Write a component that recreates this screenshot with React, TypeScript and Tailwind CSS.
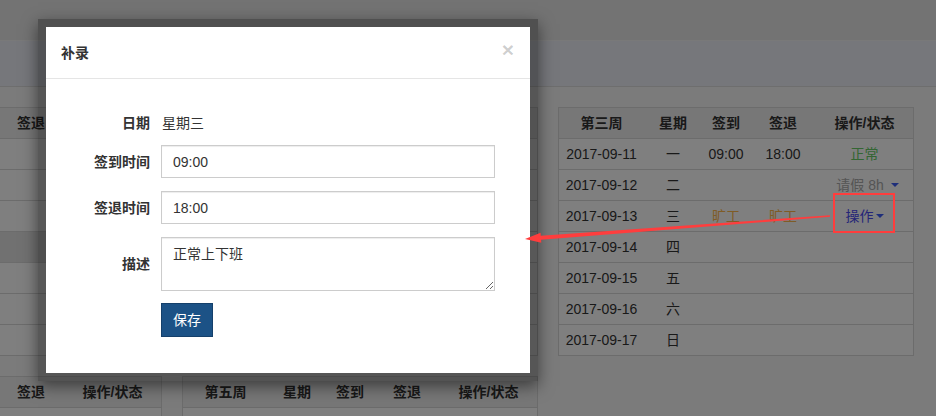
import React from 'react';

type Day = {
  date: string;
  weekday: string;
  signIn?: React.ReactNode;
  signOut?: React.ReactNode;
  status?: React.ReactNode;
  shaded?: boolean;
};

type Week = { title: string; days: Day[] };

const Caret = ({ className }: { className: string }) => (
  <span className={'inline-block h-0 w-0 border-x-[4px] border-t-[4px] border-x-transparent align-middle ' + className} />
);

const Absent = () => <span className="text-[#ffb84d]">旷工</span>;

const weekdays = ['一', '二', '三', '四', '五', '六', '日'];

function makeDays(dates: string[], fill?: (i: number) => Partial<Day>): Day[] {
  return dates.map((date, i) => ({ date, weekday: weekdays[i], ...(fill ? fill(i) : {}) }));
}

const weeks: Week[] = [
  {
    title: '第一周',
    days: makeDays(
      ['2017-08-28', '2017-08-29', '2017-08-30', '2017-08-31', '2017-09-01', '2017-09-02', '2017-09-03'],
      (i) => (i === 3 ? { shaded: true } : {})
    ),
  },
  {
    title: '第二周',
    days: makeDays(
      ['2017-09-04', '2017-09-05', '2017-09-06', '2017-09-07', '2017-09-08', '2017-09-09', '2017-09-10'],
      (i) =>
        i < 5
          ? { signIn: '09:00', signOut: '18:00', status: <span className="text-[#66cc66]">正常</span> }
          : {}
    ),
  },
  {
    title: '第三周',
    days: [
      {
        date: '2017-09-11',
        weekday: '一',
        signIn: '09:00',
        signOut: '18:00',
        status: <span className="text-[#66cc66]">正常</span>,
      },
      {
        date: '2017-09-12',
        weekday: '二',
        status: (
          <span className="inline-flex items-center pl-[6px]">
            <span className="text-[#aaaaaa]">请假 8h</span>
            <Caret className="ml-[7px] border-t-[#3d5cf5]" />
          </span>
        ),
      },
      {
        date: '2017-09-13',
        weekday: '三',
        signIn: <Absent />,
        signOut: <Absent />,
        status: (
          <span className="inline-flex items-center">
            <span className="text-[#4b4bf0]">操作</span>
            <Caret className="ml-[2px] border-t-[#3d5cf5]" />
          </span>
        ),
      },
      { date: '2017-09-14', weekday: '四' },
      { date: '2017-09-15', weekday: '五' },
      { date: '2017-09-16', weekday: '六' },
      { date: '2017-09-17', weekday: '日' },
    ],
  },
  {
    title: '第四周',
    days: makeDays(['2017-09-18', '2017-09-19', '2017-09-20', '2017-09-21', '2017-09-22', '2017-09-23', '2017-09-24']),
  },
  {
    title: '第五周',
    days: makeDays(['2017-09-25', '2017-09-26', '2017-09-27', '2017-09-28', '2017-09-29', '2017-09-30', '2017-10-01']),
  },
];

const WeekTable = ({ week }: { week: Week }) => (
  <div className="w-[356px] shrink-0 border border-[#d8d8d8] bg-white">
    <div className="grid h-[30px] grid-cols-[85px_58px_48px_66px_97px] items-center bg-[#eeeeee] text-center font-bold">
      <div>{week.title}</div>
      <div>星期</div>
      <div>签到</div>
      <div>签退</div>
      <div>操作/状态</div>
    </div>
    {week.days.map((d) => (
      <div
        key={d.date}
        className={
          'grid h-[31px] grid-cols-[85px_58px_48px_66px_97px] items-center border-t border-[#d8d8d8] text-center ' +
          (d.shaded ? 'bg-[#e2e2e2]' : '')
        }
      >
        <div>{d.date}</div>
        <div>{d.weekday}</div>
        <div>{d.signIn}</div>
        <div>{d.signOut}</div>
        <div>{d.status}</div>
      </div>
    ))}
  </div>
);

const FieldRow = ({ label, children, className }: { label: string; children: React.ReactNode; className: string }) => (
  <div className={'flex items-center ' + className}>
    <label className="w-[104px] shrink-0 text-right font-bold">{label}</label>
    <div className="ml-[11px]">{children}</div>
  </div>
);

export default function App() {
  return (
    <div className="relative h-[416px] w-[936px] overflow-hidden bg-[#f6f6f6] font-['Liberation_Sans','Noto_Sans_CJK_SC',sans-serif] text-[14px] leading-[20px] text-[#333]">
      {/* page chrome */}
      <div className="h-[41px] border-b border-[#f2f2f2] bg-[#e6e6e6]" />
      <div className="h-[46px] border-b border-[#dcdcdc] bg-[#eceef6]" />

      {/* month grid, one table per week */}
      <div className="ml-[-194px] mt-[20px] flex flex-col gap-[20px]">
        <div className="flex gap-[20px]">
          {weeks.slice(0, 3).map((w) => (
            <WeekTable key={w.title} week={w} />
          ))}
        </div>
        <div className="flex gap-[20px]">
          {weeks.slice(3).map((w) => (
            <WeekTable key={w.title} week={w} />
          ))}
        </div>
      </div>

      {/* backdrop */}
      <div className="absolute inset-0 bg-black/50" />

      {/* dialog */}
      <div className="absolute left-[38px] top-[19px] h-[362px] w-[500px] bg-black/30 p-[8px] shadow-[0_5px_15px_rgba(0,0,0,0.5)]">
        <div className="h-full bg-white">
          <div className="flex h-[52px] items-center justify-between border-b border-[#e5e5e5] pl-[15px] pr-[16px]">
            <span className="font-bold">补录</span>
            <span className="mt-[-7px] text-[21px] font-bold leading-none text-black/20">×</span>
          </div>
          <div className="pt-[27px]">
            <FieldRow label="日期" className="mb-[5px] h-[34px]">
              <span className="ml-[1px]">星期三</span>
            </FieldRow>
            <FieldRow label="签到时间" className="mb-[13px]">
              <input
                readOnly
                value="09:00"
                className="h-[33px] w-[334px] border border-[#cccccc] px-[11px] text-[#333] shadow-[inset_0_1px_1px_rgba(0,0,0,0.075)] outline-none"
              />
            </FieldRow>
            <FieldRow label="签退时间" className="mb-[13px]">
              <input
                readOnly
                value="18:00"
                className="h-[33px] w-[334px] border border-[#cccccc] px-[11px] text-[#333] shadow-[inset_0_1px_1px_rgba(0,0,0,0.075)] outline-none"
              />
            </FieldRow>
            <FieldRow label="描述" className="mb-[12px]">
              <textarea
                readOnly
                defaultValue="正常上下班"
                className="block h-[54px] w-[334px] resize-y border border-[#cccccc] px-[11px] py-[6px] leading-[20px] text-[#333] shadow-[inset_0_1px_1px_rgba(0,0,0,0.075)] outline-none"
              />
            </FieldRow>
            <div className="pl-[115px]">
              <button className="h-[34px] w-[52px] border border-[#15406b] bg-[#1c5286] text-white">保存</button>
            </div>
          </div>
        </div>
      </div>

      {/* red callout pointing from the row action to the dialog */}
      <svg className="pointer-events-none absolute left-0 top-0" width="936" height="416" viewBox="0 0 936 416">
        <rect x="834" y="194" width="60" height="38" fill="none" stroke="#ff3d3d" strokeWidth="2" />
        <polygon
          fill="#ff3d3d"
          points="525,239 540.6,232.8 540.8,235.8 829.9,215.2 830.1,216.8 541.1,239.8 541.3,242.8"
        />
      </svg>
    </div>
  );
}
